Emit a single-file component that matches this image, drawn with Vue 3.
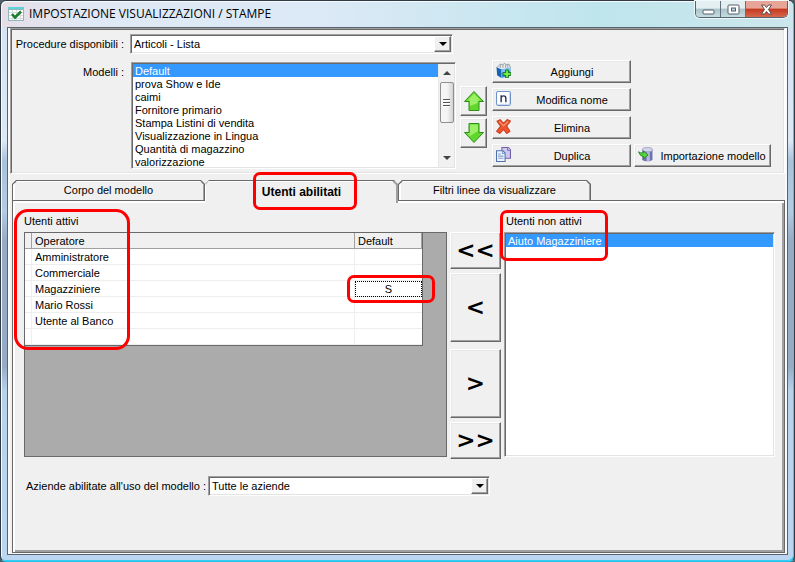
<script setup>
import { ref } from 'vue'

const procedure = ref('Articoli - Lista')
const company = ref('Tutte le aziende')
const models = [
  'Default',
  'prova Show e Ide',
  'caimi',
  'Fornitore primario',
  'Stampa Listini di vendita',
  'Visualizzazione in Lingua',
  'Quantità di magazzino',
  'valorizzazione',
]
const model = ref('Default')
const inactive = ref('Aiuto Magazziniere')
const operators = [
  { name: 'Amministratore', flag: '' },
  { name: 'Commerciale', flag: '' },
  { name: 'Magazziniere', flag: 'S' },
  { name: 'Mario Rossi', flag: '' },
  { name: 'Utente al Banco', flag: '' },
  { name: '', flag: '' },
]
</script>

<template>
  <main class="window">
    <header class="titlebar">
      <svg class="app-icon" viewBox="0 0 16 14" aria-hidden="true">
        <rect x="0" y="0" width="16" height="14" fill="#8fb9bb" />
        <rect x="1" y="3" width="14" height="10" fill="#fff" />
        <rect x="0" y="0" width="16" height="2" fill="#5fd3dc" />
        <path d="M4.500 3v10M8.500 3v10M12.500 3v10M1 5.500h14M1 8.500h14M1 11.500h14" stroke="#d5dadb" stroke-width="1" />
        <path d="M4 7l3 3.500 6-6" fill="none" stroke="#1d7d2c" stroke-width="2.600" />
      </svg>
      <h1>IMPOSTAZIONE VISUALIZZAZIONI / STAMPE</h1>
      <div class="caption-buttons">
        <button type="button" class="cap" aria-label="Riduci a icona">
          <svg viewBox="0 0 13 11"><rect x="1" y="6" width="11" height="4" rx="1" fill="#fff" stroke="#55606c" /></svg>
        </button>
        <button type="button" class="cap" aria-label="Ingrandisci">
          <svg viewBox="0 0 13 11">
            <rect x="1" y="1" width="11" height="9" rx="1" fill="#fff" stroke="#55606c" />
            <rect x="4.500" y="4" width="4" height="3" fill="#b7d3d9" stroke="#55606c" />
          </svg>
        </button>
        <button type="button" class="cap close" aria-label="Chiudi">
          <svg viewBox="0 0 13 11">
            <path d="M1.500 1h3l2 2.500L8.500 1h3L8.500 5.500l3 4.500h-3l-2-2.500L4.500 10h-3l3-4.500z" fill="#fff" stroke="#5c4a50" />
          </svg>
        </button>
      </div>
    </header>

    <div class="client">
      <section class="top-panel">
        <div class="model-form">
          <label for="procedure">Procedure disponibili :</label>
          <div class="combo procedure-combo">
            <select id="procedure" v-model="procedure">
              <option>Articoli - Lista</option>
            </select>
            <span class="drop" aria-hidden="true"></span>
          </div>
          <label for="models">Modelli :</label>
          <div class="list models-list">
            <select id="models" v-model="model" size="8">
              <option v-for="m in models" :key="m">{{ m }}</option>
            </select>
            <div class="scrollbar" aria-hidden="true">
              <span class="caret up"></span>
              <span class="thumb"></span>
              <span class="caret down"></span>
            </div>
          </div>
        </div>

        <div class="order-buttons">
          <button type="button" class="btn" aria-label="Sposta su">
            <svg viewBox="0 0 20 20">
              <path d="M10 .5L19.500 10.500H15V19.500H5V10.500H.5z" fill="#62d62c" stroke="#2f8f1c" />
              <path d="M10 2.500L16.500 9.500H13.800V12L6 15V9.500H3.500z" fill="#9bf065" />
            </svg>
          </button>
          <button type="button" class="btn" aria-label="Sposta giù">
            <svg viewBox="0 0 20 20">
              <path d="M10 19.500L19.500 9.500H15V.5H5V9.500H.5z" fill="#62d62c" stroke="#2f8f1c" />
              <path d="M6 1.500H14V8L6 13L3.500 10.500H6z" fill="#9bf065" />
            </svg>
          </button>
        </div>

        <div class="actions">
          <button type="button" class="btn action">
            <svg viewBox="0 0 14 14">
              <path d="M1 4l3-3 2 .5 2-1 2 1 2-.5 1.500 3-2 2H2z" fill="#e9edf0" stroke="#8a949c" stroke-width=".8" />
              <path d="M4 1.500v3M6.500 1.500v3M9 1.500v3M11 1.500v3" stroke="#8a949c" stroke-width=".8" />
              <path d="M.5 4l4.500 2v8L1 11.500z" fill="#1763b5" />
              <path d="M5 6l8.500-1.500V12L5 14z" fill="#3d9be8" />
              <path d="M5 6l8.500-1.500V7L5 9z" fill="#7cc4f7" />
              <path d="M9 6.500h2.500V9H14v2.500h-2.500V14H9v-2.500H6.500V9H9z" fill="#7df04a" stroke="#11701a" stroke-width=".9" />
            </svg>
            <span>Aggiungi</span>
          </button>
          <button type="button" class="btn action">
            <svg viewBox="0 0 14 14">
              <rect x=".5" y=".5" width="13" height="13" rx="1.500" fill="#fff" stroke="#6f93c9" />
              <path d="M2 12.500h10.500V2" fill="none" stroke="#cbd8ee" />
              <path d="M4.800 10.500V4M4.800 6Q5.500 4.500 7.200 4.500Q9.200 4.500 9.200 6.800V10.500" fill="none" stroke="#23304f" stroke-width="1.300" />
            </svg>
            <span>Modifica nome</span>
          </button>
          <button type="button" class="btn action">
            <svg viewBox="0 0 14 14">
              <path d="M1 2L4 .6 7 4 10.500.5l3 1.500L10 6.500l3 5-3 2L7 9.800 3.500 13.500.5 11.500 4.200 6.800z" fill="#ef5330" stroke="#c8401f" stroke-width="1" />
              <path d="M3 2.200l4 4 4.500-4" fill="none" stroke="#ff9a78" />
            </svg>
            <span>Elimina</span>
          </button>
          <button type="button" class="btn action">
            <svg viewBox="0 0 14 14">
              <path d="M5.500.5h6l2 2v8h-8z" fill="#cfc9ee" stroke="#6e5fae" />
              <path d="M11 .5v2.500h2.500" fill="#fff" stroke="#6e5fae" />
              <path d="M.5 3.500h6l2 2v8h-8z" fill="#f0f5fd" stroke="#4f72ae" />
              <path d="M6 3.500v2.500h2.500M2 6.500h2.500M2 8.500h5M2 10.500h5" fill="none" stroke="#7f9fd0" />
            </svg>
            <span>Duplica</span>
          </button>
          <button type="button" class="btn action import">
            <svg viewBox="0 0 14 14">
              <path d="M4 2.500v9c0 2.500 9.500 2.500 9.500 0v-9z" fill="#6f70b0" />
              <path d="M8 2.500h3v10.500H8z" fill="#b9badf" />
              <ellipse cx="8.750" cy="2.500" rx="4.750" ry="2" fill="#d4d4ea" stroke="#9091bd" stroke-width=".7" />
              <path d="M.5 4.500q2 1.500 4.500 1V3.500l4.500 4L5 11V8.800Q2 9 .5 4.500z" fill="#58d637" stroke="#1e8124" stroke-width=".8" />
            </svg>
            <span>Importazione modello</span>
          </button>
        </div>
      </section>

      <div class="tabs" role="tablist">
        <button type="button" class="tab" role="tab"><span>Corpo del modello</span></button>
        <button type="button" class="tab active" role="tab" aria-selected="true">
          <span>Utenti abilitati</span>
          <i class="mark mark-tab"></i>
        </button>
        <button type="button" class="tab" role="tab"><span>Filtri linee da visualizzare</span></button>
      </div>

      <section class="page" role="tabpanel">
        <div class="transfer">
          <div class="column">
            <h2 id="active-users">Utenti attivi</h2>
            <div class="grid-box">
              <table aria-labelledby="active-users">
                <colgroup>
                  <col class="c-sel" />
                  <col />
                  <col class="c-default" />
                </colgroup>
                <thead>
                  <tr><th></th><th>Operatore</th><th>Default</th></tr>
                </thead>
                <tbody>
                  <tr v-for="(o, i) in operators" :key="i">
                    <td></td>
                    <td>{{ o.name }}</td>
                    <td class="flag" :class="{ focused: o.flag }">
                      {{ o.flag }}<i v-if="o.flag" class="mark mark-cell"></i>
                    </td>
                  </tr>
                </tbody>
              </table>
            </div>
            <i class="mark mark-active"></i>
          </div>

          <div class="movers">
            <div class="pair">
              <button type="button" class="btn short">&lt;&lt;</button>
              <button type="button" class="btn tall">&lt;</button>
            </div>
            <div class="pair">
              <button type="button" class="btn tall">&gt;</button>
              <button type="button" class="btn short">&gt;&gt;</button>
            </div>
          </div>

          <div class="column">
            <h2><label for="inactive">Utenti non attivi</label></h2>
            <div class="list inactive-list">
              <select id="inactive" v-model="inactive" size="8">
                <option>Aiuto Magazziniere</option>
              </select>
            </div>
            <i class="mark mark-inactive"></i>
          </div>
        </div>

        <div class="company-row">
          <label for="company">Aziende abilitate all'uso del modello :</label>
          <div class="combo company-combo">
            <select id="company" v-model="company">
              <option>Tutte le aziende</option>
            </select>
            <span class="drop" aria-hidden="true"></span>
          </div>
        </div>
      </section>
    </div>
  </main>
</template>

<style>
body {
  background: #55606a;
}
</style>

<style scoped>
* {
  box-sizing: border-box;
}
.window {
  display: flex;
  flex-direction: column;
  min-height: 100vh;
  padding: 0 6px 6px;
  border: 1px solid #2f3a44;
  border-bottom-color: #23c3ec;
  border-radius: 6px;
  background:
    linear-gradient(90deg, #e6dde6 0, #dfe9f5 90px, #dce9f6 40%, #bfe5ec 75%, #cbe6ec 100%) 0 0 / 100% 27px no-repeat,
    linear-gradient(180deg, #d3e2f4 0, #dce8f5 140px, #a9c2dc 160px, #b4cbe4 210px, #95abc6 240px, #95abc6 365px, #b8d2ec 390px, #bcd6f1 100%);
  box-shadow: inset 1px 1px #f4fafd, inset -1px -1px #35cdf2;
  color: #000;
  font: 11px/13px "Liberation Sans", Arial, sans-serif;
}
.window button,
.window select {
  font: inherit;
  color: inherit;
}
.titlebar {
  display: flex;
  align-items: center;
  height: 26px;
  padding-left: 1px;
}
.app-icon {
  width: 16px;
  height: 14px;
  margin-right: 5px;
}
h1 {
  flex: 1;
  margin: 0;
  font: 12px/16px "Open Sans", "Noto Sans", sans-serif;
}
.caption-buttons {
  display: flex;
  align-self: flex-start;
  border: 1px solid #55636f;
  border-top: 0;
  border-radius: 0 0 5px 5px;
  box-shadow: 0 0 0 1px #eef8fa;
  overflow: hidden;
}
.cap {
  display: flex;
  align-items: center;
  justify-content: center;
  width: 25px;
  height: 16px;
  padding: 0;
  border: 0;
  border-right: 1px solid #5f717c;
  background: linear-gradient(#e3eff1 0 45%, #a9c3ca 50%, #c6dde1);
}
.cap svg {
  width: 13px;
  height: 11px;
}
.cap.close {
  width: 41px;
  border-right: 0;
  background: linear-gradient(#e6a596 0 45%, #c1391f 50%, #d9684c);
}
.client {
  display: flex;
  flex: 1;
  flex-direction: column;
  padding: 0 2px 1px;
  border: 1px solid #59636e;
  background: #f0f0f0;
  box-shadow: inset 2px 0 #fafafa, inset -2px -1px #fafafa;
}
.top-panel,
.combo,
.list {
  display: flex;
  border: 1px solid;
  border-color: #a0a0a0 #fff #fff #a0a0a0;
  box-shadow: inset 1px 1px #696969, inset -1px -1px #e3e3e3;
}
.top-panel {
  padding: 5px 1px 4px;
}
.model-form {
  display: grid;
  grid-template-columns: 118px 326px;
  grid-template-rows: 20px auto;
  row-gap: 8px;
}
.model-form > label {
  padding: 4px 6px 0 0;
  text-align: right;
}
.combo,
.list {
  padding: 1px;
  background: #fff;
}
.combo {
  height: 20px;
}
.combo select {
  flex: 1;
  min-width: 0;
  padding: 1px 2px 0;
  border: 0;
  background: none;
  appearance: none;
  outline: 0;
}
.procedure-combo {
  width: 323px;
}
.drop {
  display: flex;
  align-items: center;
  justify-content: center;
  width: 17px;
  border: 1px solid;
  border-color: #fff #696969 #696969 #fff;
  background: #f0f0f0;
  box-shadow: inset -1px -1px #a0a0a0;
}
.drop::before {
  content: "";
  border: 4px solid transparent;
  border-top-color: #000;
  border-bottom: 0;
}
.list select {
  flex: 1;
  min-width: 0;
  padding: 0;
  border: 0;
  border-radius: 0;
  background: #fff;
  outline: 0;
  overflow: hidden;
}
.list option {
  height: 13px;
  min-height: 13px;
  padding: 1px 2px 0;
  color: #000;
  line-height: 12px;
}
.list option:checked {
  background: #3399ff linear-gradient(#3399ff, #3399ff);
  color: #fff;
  -webkit-text-fill-color: #fff;
}
.models-list {
  height: 107px;
  margin-left: 1px;
}
.scrollbar {
  display: flex;
  flex-direction: column;
  align-items: center;
  width: 16px;
  padding: 7px 0;
  border-left: 1px solid #e8e8e8;
  background: #f1f1f1;
}
.caret {
  border: 4px solid transparent;
}
.caret.up {
  border-top: 0;
  border-bottom-color: #444;
}
.caret.down {
  margin-top: auto;
  border-bottom: 0;
  border-top-color: #444;
}
.thumb {
  display: flex;
  align-items: center;
  justify-content: center;
  width: 14px;
  height: 41px;
  margin-top: 7px;
  border: 1px solid #8f8f8f;
  border-radius: 2px;
  background: linear-gradient(90deg, #f5f5f5 50%, #d2d2d4);
}
.thumb::before {
  content: "";
  width: 7px;
  height: 8px;
  background: repeating-linear-gradient(#555 0 1px, #fff 1px 2px, transparent 2px 3px);
}
.btn {
  display: flex;
  align-items: center;
  justify-content: center;
  padding: 0;
  border: 1px solid;
  border-color: #fff #696969 #696969 #fff;
  border-radius: 0;
  background: #f0f0f0;
  box-shadow: inset -1px -1px #a0a0a0, inset 1px 1px #e8e8e8;
}
.order-buttons {
  display: grid;
  gap: 2px;
  align-content: start;
  margin: 52px 5px 0 4px;
}
.order-buttons .btn {
  width: 27px;
  height: 30px;
}
.order-buttons svg {
  width: 20px;
  height: 20px;
}
.actions {
  display: grid;
  grid-template-columns: 139px 137px;
  grid-auto-rows: 23px;
  gap: 5px 3px;
  align-content: start;
  margin-top: 26px;
}
.action {
  grid-column: 1;
  gap: 6px;
  padding: 0 3px;
}
.action svg {
  flex: none;
  width: 15px;
  height: 15px;
  margin-bottom: 2px;
}
.action span {
  flex: 1;
  padding-top: 1px;
}
.import {
  grid-row: 4;
  grid-column: 2;
}
.tabs {
  display: flex;
  margin: 6px 0 0 2px;
}
.tab {
  position: relative;
  display: flex;
  align-items: center;
  justify-content: center;
  width: 193px;
  height: 20px;
  padding: 0;
  border: 0;
  background: none;
}
.tab::before,
.tab::after {
  content: "";
  position: absolute;
  inset: 0;
  background: #696969;
  clip-path: polygon(0 4px, 4px 0, calc(100% - 4px) 0, 100% 4px, 100% 100%, 0 100%);
}
.tab::after {
  inset: 1px 1px 0;
  background: #f0f0f0;
  box-shadow: inset 2px 1px #fff, inset -1px 0 #a0a0a0;
}
.tab span {
  position: relative;
  z-index: 1;
}
.window .tab.active {
  z-index: 1;
  height: 23px;
  margin-bottom: -3px;
  font: bold 12px/14px "Liberation Sans", Arial, sans-serif;
}
.tab.active::before {
  background: linear-gradient(#696969 1px, #a0a0a0 1px);
}
.tab.active::after {
  inset: 1px 2px 0 0;
  box-shadow: inset 1px 1px #fff;
}
.page {
  flex: 1;
  margin-left: 2px;
  padding: 13px 9px 20px 11px;
  border: 1px solid #696969;
  box-shadow: inset 2px 2px #fff, inset -2px -2px #a0a0a0;
}
.transfer {
  display: grid;
  grid-template-columns: minmax(0, 423fr) 51px minmax(0, 271fr);
  gap: 3px;
}
.column {
  position: relative;
}
h2 {
  margin: 0 0 4px;
  font: inherit;
  line-height: 14px;
}
.column:last-child h2 {
  padding-left: 2px;
}
.grid-box {
  height: 225px;
  padding-right: 23px;
  border: 1px solid #696969;
  background: #ababab;
}
table {
  width: 100%;
  border-collapse: separate;
  border-spacing: 0;
  border-right: 1px solid #696969;
  border-bottom: 1px solid #696969;
  background: #fff;
  table-layout: fixed;
}
.c-sel {
  width: 7px;
}
.c-default {
  width: 67px;
}
th,
td {
  height: 16px;
  padding: 1px 3px 0;
  border-right: 1px solid #eee;
  border-bottom: 1px solid #eee;
  font-weight: normal;
  line-height: 14px;
  text-align: left;
}
th {
  border-color: #a0a0a0;
  background: #f0f0f0;
}
th:first-child,
td:first-child {
  padding: 0;
}
td:last-child {
  border-right: 0;
}
.flag {
  position: relative;
  text-align: center;
}
.focused {
  outline: 1px dotted #000;
  outline-offset: -1px;
}
.movers {
  display: flex;
  flex-direction: column;
  gap: 7px;
  padding-top: 18px;
}
.pair {
  display: grid;
  gap: 4px;
}
.window .movers .btn {
  padding-bottom: 2px;
  font: bold 23px/24px "DejaVu Sans", sans-serif;
}
.short {
  height: 37px;
}
.tall {
  height: 69px;
}
.inactive-list {
  height: 225px;
}
.company-row {
  display: flex;
  align-items: center;
  margin-top: 17px;
  padding-left: 2px;
}
.company-row label {
  flex: none;
  min-width: 182px;
  white-space: nowrap;
}
.company-combo {
  width: 282px;
}
/* red highlight frames laid over the form */
.mark {
  position: absolute;
  z-index: 3;
  border: 3px solid #f00;
  border-radius: 7px;
  pointer-events: none;
}
.mark-tab {
  top: -8px;
  left: 48px;
  width: 104px;
  height: 38px;
}
.mark-cell {
  top: -6px;
  left: -8px;
  width: 88px;
  height: 28px;
}
.mark-active {
  top: -5px;
  left: -10px;
  width: 116px;
  height: 141px;
  border-radius: 14px;
}
.mark-inactive {
  top: -4px;
  left: -4px;
  width: 108px;
  height: 51px;
}
</style>
